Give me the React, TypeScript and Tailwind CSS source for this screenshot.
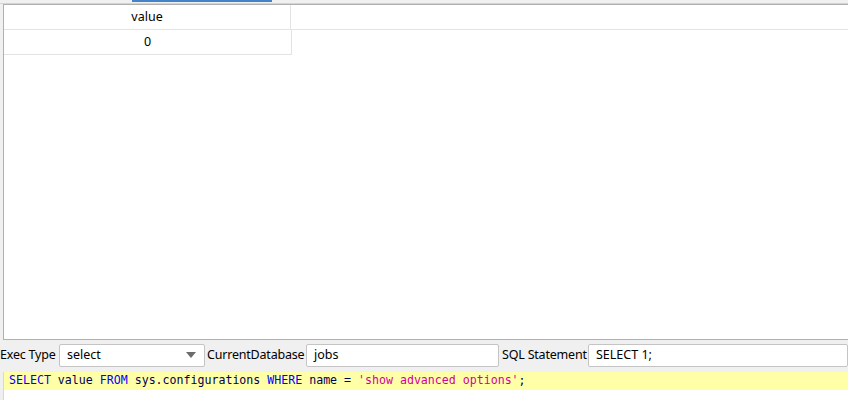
const ui = { fontFamily: '"Noto Sans", "Liberation Sans", sans-serif' };
const mono = { fontFamily: '"DejaVu Sans Mono", "Liberation Mono", monospace' };

function Field({ value, className }: { value: string; className: string }) {
  return (
    <div className={`h-[23px] flex items-center px-[7px] bg-white border border-[#c4c4c4] rounded-[2px] text-[12.5px] text-black ${className}`}>
      {value}
    </div>
  );
}

export default function App() {
  return (
    <div className="w-[848px] h-[400px] bg-[#f0f0f0] flex flex-col overflow-hidden text-black" style={ui}>
      {/* tab strip */}
      <div className="h-[4px] pl-[132px] border-b border-[#d4d4d4]">
        <div className="w-[140px] h-[2px] bg-[#4383c9]" />
      </div>

      {/* result grid */}
      <div className="ml-[3px] h-[336px] bg-white border-l border-t border-b border-[#b0b0b0]">
        <div className="h-[25px] flex border-b border-[#e3e3e3]">
          <div className="w-[287px] pt-[1px] flex items-center justify-center border-r border-[#e3e3e3] text-[12.5px]">value</div>
        </div>
        <div className="w-[288px] h-[25px] pt-[1px] flex items-center justify-center border-r border-b border-[#e3e3e3] text-[12.5px]">0</div>
      </div>

      {/* options row */}
      <div className="mt-[3px] h-[24px] flex items-center text-[12.5px]">
        <span className="w-[59px] shrink-0 tracking-[-0.2px]">Exec Type</span>
        <div className="w-[146px] h-[23px] flex items-center justify-between pl-[7px] pr-[7px] bg-white border border-[#c4c4c4] rounded-[2px]">
          <span>select</span>
          <svg width="10" height="6" viewBox="0 0 10 6" className="mr-[1px]"><path d="M0 0h10L5 6z" fill="#6b6b6b" /></svg>
        </div>
        <span className="w-[101px] shrink-0 pl-[2px] tracking-[-0.2px]">CurrentDatabase</span>
        <Field value="jobs" className="w-[193px]" />
        <span className="w-[89px] shrink-0 pl-[3px] tracking-[-0.2px]">SQL Statement</span>
        <Field value="SELECT 1;" className="flex-1" />
      </div>

      {/* sql editor */}
      <div className="mt-[5px] ml-[3px] flex-1 bg-white border-l border-[#d8d8d8]">
        <div className="h-[18px] bg-[#ffffa8] flex items-center pl-[5px] text-[11.6px] whitespace-pre" style={mono}>
          <span className="text-[#0000ff]">SELECT</span>
          <span className="text-[#000050]"> value </span>
          <span className="text-[#0000ff]">FROM</span>
          <span className="text-[#000050]"> sys.configurations </span>
          <span className="text-[#0000ff]">WHERE</span>
          <span className="text-[#000050]"> name = </span>
          <span className="text-[#d4009c]">'show advanced options'</span>
          <span className="text-[#000050]">;</span>
        </div>
      </div>
    </div>
  );
}
